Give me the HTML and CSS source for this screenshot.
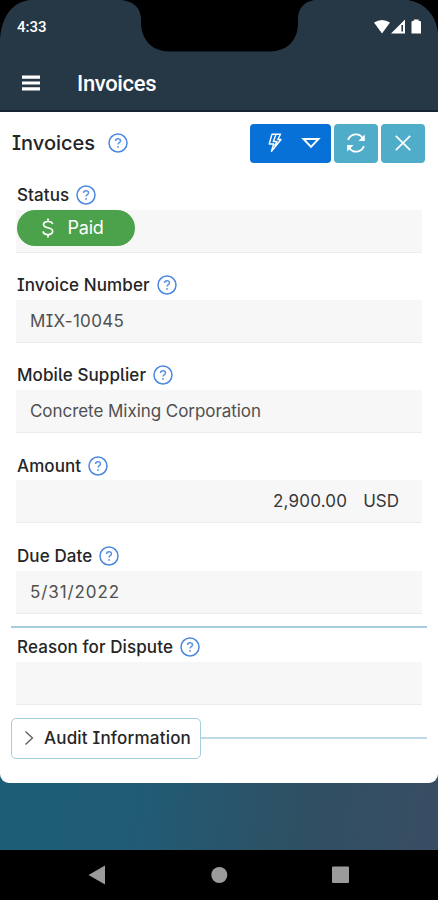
FILE: index.html
```html
<!DOCTYPE html>
<html lang="en">
<head>
<meta charset="utf-8">
<title>Invoices</title>
<link rel="stylesheet" href="styles.css">
</head>
<body>
<svg class="defs" width="0" height="0" aria-hidden="true">
  <symbol id="help" viewBox="0 0 20 20">
    <circle cx="10" cy="10" r="9" fill="none" stroke="#4c87df" stroke-width="1.5"/>
    <path d="M7.5 8.1C7.5 6.6 8.5 5.8 10 5.8s2.5.8 2.5 2.1c0 1.7-2.5 1.8-2.5 3.5" fill="none" stroke="#5b91e2" stroke-width="1.4"/>
    <circle cx="10" cy="13.9" r=".95" fill="#5b91e2"/>
  </symbol>
</svg>
<div class="phone">
  <header class="top">
    <svg class="cutout" viewBox="0 0 438 52" aria-hidden="true">
      <path d="M0 0H30C13 2 2 15 0 39ZM122 0C134 2 140 7 141 18V25C143 42 153 51 169 51.500H270C286 51 297 42 298 25V17C299 7 305 2 314 0ZM408 0H438V32C435 14 425 3 408 0Z"/>
    </svg>
    <div class="status-bar">
      <span class="clock">4:33</span>
      <svg class="signals" width="50" height="18" viewBox="0 0 50 18" aria-hidden="true">
        <path d="M1 4.500Q9 -.5 17 4.500L9 15.500Z" fill="#fff"/>
        <path d="M32 1.500V15.500H18Z" fill="#fff"/><path d="M29.200 7V13.500" stroke="#263746" stroke-width="1.600"/>
        <path d="M38.500 3.500L41 2.500V1.500h4.500v1L48 3.500v12h-9.500z" fill="#fff"/>
      </svg>
    </div>
    <div class="app-bar">
      <svg width="18" height="16" viewBox="0 0 18 16" aria-hidden="true"><path d="M0 2.200H18M0 8H18M0 13.800H18" stroke="#fff" stroke-width="3.200"/></svg>
      <span class="app-title">Invoices</span>
    </div>
  </header>
  <main class="stage">
    <section class="card">
      <div class="heading">
        <h1>Invoices</h1>
        <svg class="help"><use href="#help"/></svg>
        <div class="actions">
          <button class="run" aria-label="Actions">
            <svg width="14" height="20" viewBox="0 0 14 20"><path d="M4 1.200H12.500L9.800 6.500H13L3.500 18.300L5.600 11H1.200ZM7.800 2L5.300 8.500H9L6.500 13" fill="none" stroke="#fff" stroke-width="1.400" stroke-linejoin="round"/></svg>
            <svg width="20" height="12" viewBox="0 0 20 12"><path d="M2.500 2H17.500L10 9.800Z" fill="none" stroke="#fff" stroke-width="1.900"/></svg>
          </button>
          <button class="tool" aria-label="Refresh">
            <svg width="20" height="20" viewBox="0 0 20 20"><path d="M2 6.800C5-.2 13.500-.2 16.500 5M18 13.200C15 20.200 6.500 20.200 3.500 15" fill="none" stroke="#fff" stroke-width="1.800"/><path d="M18.800 1.500V7.900H12.400ZM1.200 18.500V12.100H7.600Z" fill="#fff"/></svg>
          </button>
          <button class="tool" aria-label="Close">
            <svg width="18" height="18" viewBox="0 0 18 18"><path d="M1.800 1.800L16.200 16.200M16.200 1.800L1.800 16.200" stroke="#fff" stroke-width="1.700"/></svg>
          </button>
        </div>
      </div>
      <div class="fields">
        <div class="field">
          <div class="label"><span class="status-label">Status</span><svg class="help"><use href="#help"/></svg></div>
          <div class="box flush"><span class="pill"><svg width="12" height="20" viewBox="0 0 12 20" aria-hidden="true"><path d="M10.600 6.200C10.300 4.300 8.500 3.500 6 3.500S1.500 4.600 1.500 6.500C1.500 11 10.600 8.500 10.600 13.200C10.600 15.400 8.700 16.500 6 16.500S1.300 15.300 1.100 13.300M6 .5V3.500M6 16.500V19.500" fill="none" stroke="#fff" stroke-width="1.700"/></svg><span class="paid">Paid</span></span></div>
        </div>
        <div class="field">
          <div class="label"><span>Invoice Number</span><svg class="help"><use href="#help"/></svg></div>
          <div class="box"><span class="code">MIX-10045</span></div>
        </div>
        <div class="field">
          <div class="label"><span>Mobile Supplier</span><svg class="help"><use href="#help"/></svg></div>
          <div class="box"><span class="supplier">Concrete Mixing Corporation</span></div>
        </div>
        <div class="field">
          <div class="label"><span>Amount</span><svg class="help"><use href="#help"/></svg></div>
          <div class="box money"><span class="amount">2,900.00</span><span>USD</span></div>
        </div>
        <div class="field">
          <div class="label"><span>Due Date</span><svg class="help"><use href="#help"/></svg></div>
          <div class="box"><span class="date">5/31/2022</span></div>
        </div>
      </div>
      <hr>
      <div class="field dispute">
        <div class="label"><span>Reason for Dispute</span><svg class="help"><use href="#help"/></svg></div>
        <div class="box"></div>
      </div>
      <div class="audit">
        <button class="audit-button"><svg width="10" height="16" viewBox="0 0 10 16" aria-hidden="true"><path d="M1.500 1.500L8.500 8L1.500 14.500" fill="none" stroke="#555" stroke-width="1.200"/></svg><span>Audit Information</span></button>
        <span class="line"></span>
      </div>
    </section>
  </main>
  <nav class="nav-bar">
    <svg width="438" height="50" viewBox="0 0 438 50" aria-hidden="true"><g fill="#9b9b9b"><path d="M88.500 25L105 15.500V34.500Z"/><circle cx="219.300" cy="25" r="8"/><rect x="332" y="16.500" width="17" height="16.500" rx="1"/></g></svg>
  </nav>
</div>
</body>
</html>
```
FILE: styles.css
```css
* { box-sizing: border-box; }
body { margin: 0; font-family: Inter, "Noto Sans", sans-serif; font-feature-settings: "cv08", "cv05"; color: #252525; }
svg { display: block; flex: none; }
.defs { position: absolute; }
.phone { width: 438px; height: 900px; display: flex; flex-direction: column; overflow: hidden; background: #000; }
.top { position: relative; height: 112px; background: #263746; border-bottom: 2px solid #172532; font-family: Roboto, sans-serif; color: #fff; }
.cutout { position: absolute; top: 0; left: 0; width: 438px; height: 52px; }
.status-bar { position: relative; height: 54px; padding: 0 15px 0 17px; display: flex; align-items: center; justify-content: space-between; }
.clock { font-size: 15px; font-weight: 500; }
.signals { width: 50px; }
.app-bar { height: 57px; padding-left: 22px; display: flex; align-items: center; gap: 37px; }
.app-title { font-size: 22px; font-weight: 500; letter-spacing: -.35px; padding-top: 1px; }
.stage { height: 738px; background: linear-gradient(100deg, #1a6075 0%, #205c76 45%, #304f62 77%, #394d63 100%); }
.card { height: 671px; padding: 0 11px; background: #fff; border-radius: 0 0 9px 9px; }
.heading { height: 66px; padding: 11px 2px 15px 1px; display: flex; align-items: center; }
h1 { margin: 0; width: 96px; font-size: 20px; font-weight: 500; letter-spacing: 0; }
.help { width: 20px; height: 20px; }
.actions { margin-left: auto; display: flex; gap: 3px; }
button { font: inherit; color: inherit; border: 0; padding: 0; margin: 0; display: flex; align-items: center; justify-content: center; }
.run, .tool { height: 39px; border-radius: 4px; }
.run { width: 81px; background: #0871d8; gap: 19px; padding-left: 8px; }
.tool { width: 44px; background: #50adc9; }
.fields { display: flex; flex-direction: column; gap: 16.3px; padding: .5px 5px 0; }
.label { height: 31px; padding: 1.5px 0 0 1px; display: flex; align-items: center; gap: 7px; font-size: 17px; font-weight: 500; letter-spacing: .1px; white-space: nowrap; }
.status-label { letter-spacing: .1px; }
.box { height: 43px; padding: 0 14px; display: flex; align-items: center; background: #f7f7f7; border-bottom: 1px solid #ececec; font-size: 17px; color: #505050; }
.box.flush { padding: 0; align-items: flex-start; }
.pill { width: 118px; height: 36px; margin-left: .5px; border-radius: 18px; background: #4ca14b; color: #fff; display: flex; align-items: center; padding-left: 25px; gap: 14px; font-size: 18px; }
.paid { letter-spacing: -.2px; }
.code { letter-spacing: .3px; }
.supplier { letter-spacing: -.05px; }
.date { letter-spacing: .9px; }
.amount { letter-spacing: .2px; }
.money { justify-content: flex-end; gap: 16px; padding-right: 23px; color: #383838; }
hr { border: 0; height: 2px; margin: 12px 0 0; background: #a6cde2; }
.dispute { padding: 0 5px; margin-top: 3px; }
.audit { margin-top: 13px; display: flex; align-items: center; }
.audit-button { width: 190px; height: 41px; padding-left: 3px; border: 1.500px solid #a5cfdf; border-radius: 5px; background: #fff; gap: 10px; font-size: 17px; font-weight: 500; letter-spacing: .2px; white-space: nowrap; }
.line { flex: 1; height: 2px; background: #bdd9e6; }
.nav-bar { height: 50px; background: #000; }
```
